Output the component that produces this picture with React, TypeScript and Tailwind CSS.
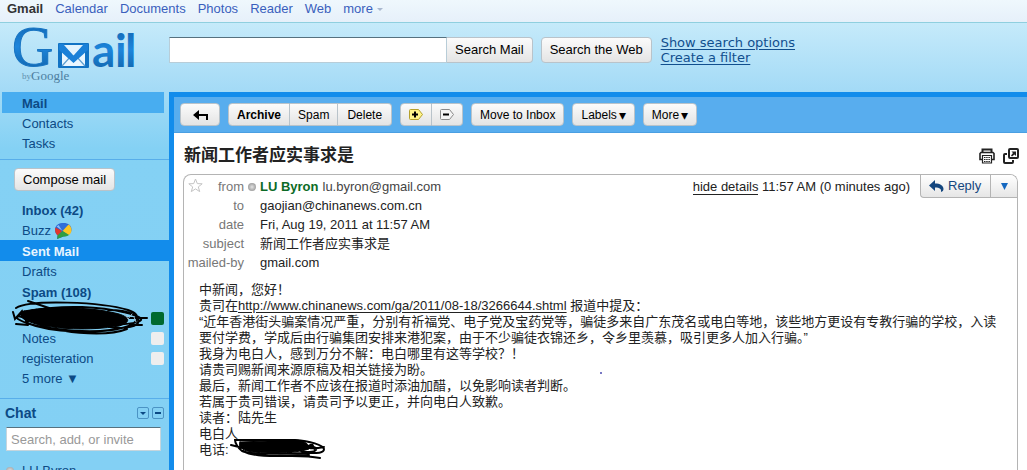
import type { ReactNode } from 'react';
import { twMerge } from 'tailwind-merge';

const NAV_LINKS = ['Calendar', 'Documents', 'Photos', 'Reader', 'Web'];

const BODY_LINES = [
  '“近年香港街头骗案情况严重，分别有祈福党、电子党及宝药党等，骗徒多来自广东茂名或电白等地，该些地方更设有专教行骗的学校，入读要付学费，学成后由行骗集团安排来港犯案，由于不少骗徒衣锦还乡，令乡里羡慕，吸引更多人加入行骗。”',
  '我身为电白人，感到万分不解：电白哪里有这等学校？！',
  '请贵司赐新闻来源原稿及相关链接为盼。',
  '最后，新闻工作者不应该在报道时添油加醋，以免影响读者判断。',
  '若属于贵司错误，请贵司予以更正，并向电白人致歉。',
  '读者：陆先生',
  '电白人',
];

function Logo() {
  return (
    <svg
      className="overflow-visible"
      width="136"
      height="64"
      viewBox="0 0 136 64"
      role="img"
      aria-label="Gmail by Google"
    >
      <defs>
        <linearGradient id="logo-blue" x1="0" y1="0" x2="0" y2="1">
          <stop offset="0" stopColor="#0f5ea8" />
          <stop offset="0.5" stopColor="#1d86dc" />
          <stop offset="1" stopColor="#0f5c9f" />
        </linearGradient>
      </defs>
      <text
        x="12"
        y="43"
        fontSize="57"
        fontFamily="'Liberation Serif', serif"
        fill="url(#logo-blue)"
        stroke="#1874c2"
        strokeWidth="1"
      >
        G
      </text>
      <rect x="58" y="20" width="31" height="25" rx="1" fill="#1273c4" />
      <path d="M62 24h23v19H62z" fill="#eaf6ff" />
      <path d="M62 43l9-10M85 43l-9-10" stroke="#5f9fd0" strokeWidth="1.2" />
      <path d="M59 21h5l9.500 11L83 21h5v6l-14.500 13L59 27z" fill="#1a80d8" />
      <path d="M64 22h19l-9.500 10.500z" fill="#e2f3fe" />
      <text
        x="92 115 125"
        y="44"
        fontSize="46"
        fontWeight="700"
        fontFamily="Lato, sans-serif"
        fill="url(#logo-blue)"
      >
        ail
      </text>
      <text x="22" y="56" fontSize="9" fontFamily="'Liberation Serif', serif" fill="#5f8fae">
        by
      </text>
      <text x="31" y="57" fontSize="13" fontFamily="'Liberation Serif', serif" fill="#4c7d9f">
        Google
      </text>
    </svg>
  );
}

function BuzzIcon() {
  return (
    <svg width="17" height="16" viewBox="0 0 17 16" aria-hidden="true">
      <path d="M8 0c5.500 0 8.500 2.500 8.500 6.500S13 13 8.500 13.500L2 16l.5-4C.8 10.800 0 9 0 7c0-4 3-7 8-7z" fill="#2a62d0" />
      <path d="M.5 4.500L7 8l-4 4.500C.5 11-.5 8 .5 4.500z" fill="#e3362b" />
      <path d="M3 2l4.500 6L13 2C10-.5 6-.5 3 2z" fill="#2f6fd8" />
      <path d="M13.500 1.500L7.500 8l6 4c4-2 4-8 0-10.500z" fill="#fbc623" />
      <path d="M7.500 8l6.500 4c-1.500 1-3.500 1.500-5.500 1.500L2 16l.7-3.800z" fill="#2f9e41" />
      <path d="M1.500 3.500L7.500 8 3.500 2z" fill="#8bbcf7" />
    </svg>
  );
}

function BackIcon() {
  return (
    <svg width="15" height="10" viewBox="0 0 15 10" aria-hidden="true">
      <path d="M0 5l6-5v4h9v6h-2V6H6v4z" fill="#000" />
    </svg>
  );
}

function TagIcon({ kind }: { kind: 'add' | 'remove' }) {
  const add = kind === 'add';
  return (
    <svg width="14" height="11" viewBox="0 0 14 11" aria-hidden="true">
      <path
        d="M1.500.5h8l4 5-4 5h-8a1 1 0 01-1-1v-8a1 1 0 011-1z"
        fill={add ? '#fff58a' : '#f4f4f4'}
        stroke={add ? '#b5a02c' : '#8a8a8a'}
      />
      <path d={add ? 'M3 4.500h2v-2h2v2h2v2H7v2H5v-2H3z' : 'M3 4.500h6v2H3z'} fill="#000" />
    </svg>
  );
}

function StarIcon() {
  return (
    <svg width="15" height="15" viewBox="0 0 15 15" aria-hidden="true">
      <path
        d="M7.500 1l1.800 4.600 4.900.2-3.900 3.100 1.400 4.700-4.200-2.700-4.200 2.700 1.400-4.700L.8 5.800l4.900-.2z"
        fill="#fff"
        stroke="#c4c4c4"
      />
    </svg>
  );
}

function PrintIcon() {
  return (
    <svg width="16" height="16" viewBox="0 0 16 16" fill="none" stroke="#222" aria-hidden="true">
      <path d="M3.500 4V1.500h9V4" strokeWidth="2" />
      <path d="M3 11.500H1v-6l1-1h12l1 1v6h-2" strokeWidth="1.600" />
      <path d="M3.500 7.500h9v7.500h-9z" fill="#fff" strokeWidth="1.200" />
      <path d="M5 9.500h6M5 11.500h6M5 13.500h6" strokeDasharray="1.500 .7" />
    </svg>
  );
}

function NewWindowIcon() {
  return (
    <svg width="16" height="16" viewBox="0 0 16 16" fill="none" stroke="#222" aria-hidden="true">
      <path d="M4 6H2a1 1 0 00-1 1v7a1 1 0 001 1h7a1 1 0 001-1v-2" strokeWidth="2" />
      <rect x="6" y="1" width="9" height="9" rx="1" strokeWidth="2" />
      <path d="M8.500 3.500H13V8l-1.500-1.500-2.500 2-1-1 2-2.500z" fill="#222" stroke="none" />
    </svg>
  );
}

function ReplyIcon() {
  return (
    <svg width="15" height="12" viewBox="0 0 15 12" aria-hidden="true">
      <path d="M0 5.500L6 0v3.500c5 0 8.500 2 8.500 5.500 0 1.500-1 2.500-2.500 3 .5-3-1-4.500-6-4.500V11z" fill="#14467e" />
    </svg>
  );
}

function ToolButton({
  children,
  className,
  label,
}: {
  children: ReactNode;
  className?: string;
  label?: string;
}) {
  return (
    <button
      type="button"
      aria-label={label}
      className={twMerge(
        'flex h-[23px] items-center justify-center border border-[#b9c3ca] bg-linear-to-b from-[#fbfbfb] to-[#e4e4e4] px-2 whitespace-nowrap text-black',
        className,
      )}
    >
      {children}
    </button>
  );
}

function FolderLink({
  children,
  className,
  color,
}: {
  children: ReactNode;
  className?: string;
  color?: string;
}) {
  return (
    <li className={twMerge('flex h-5 items-center pr-[5px] pl-[22px]', className)}>
      <a href="#" className="flex items-center gap-1 pt-0.5">
        {children}
      </a>
      {color && <span className={twMerge('ml-auto size-[13px] rounded-xs', color)} />}
    </li>
  );
}

function Detail({ label, badge, children }: { label: string; badge?: boolean; children: ReactNode }) {
  return (
    <div className="flex h-[19px] items-center">
      <dt className="w-15 text-right text-[#777]">{label}</dt>
      <dd className="flex items-center">
        <span className="flex w-4 justify-center">
          {badge && <span className="size-2 rounded-full bg-radial from-[#e4e4e4] to-[#858585]" />}
        </span>
        {children}
      </dd>
    </div>
  );
}

function LabelScribble() {
  return (
    <svg
      className="absolute -top-2 left-3"
      width="138"
      height="36"
      viewBox="0 0 138 36"
      fill="none"
      stroke="#000"
      strokeLinecap="round"
      aria-hidden="true"
    >
      <path d="M12 11c24-5 67-4 91 2 14 3 18 9 4 13-30 5-64 3-83-2-9-3-21-7-12-13z" fill="#000" />
      <path
        d="M16 1l24 8M4 8c14-9 86-6 112 2 18 6 9 17-18 20C68 34 18 27 6 19c-6-6 24-13 64-12 30 1 66 9 58 14-10 6-90 4-122-5M1 12l2 7 7-8 5 12 9-13 8 14M20 20c20 14 75 17 95 9M15 23c25 10 70 11 95 5M96 10c24 0 33 7 30 13-3 5-20 6-28 4M100 18h35M4 24l12 1M118 25l12 0"
        strokeWidth="2"
      />
      <path d="M113 14l3 5 4-5M122 17l2 5" stroke="#9bb8c8" />
    </svg>
  );
}

function PhoneScribble() {
  return (
    <svg
      className="absolute -top-1 left-full"
      width="98"
      height="22"
      viewBox="0 0 98 22"
      fill="none"
      stroke="#000"
      strokeLinecap="round"
      aria-hidden="true"
    >
      <path d="M10 4l55-2c10 0 16 6 14 9-15 5-48 5-62 2C11 11 8 8 10 4z" fill="#000" />
      <path
        d="M1 7l12 3M5 2h60c15 1 28 5 29 9 0 5-10 4-20 4C50 16 20 17 12 13 8 10 5 5 5 2zM13 13c15 8 45 4 66 4M22 16c18 5 45-1 68 4M60 14c12-6 22-7 26-4 2 4-9 5-15 3M77 9l5-3 3 6M70 4c5 6 10 8 24 5"
        strokeWidth="2"
      />
    </svg>
  );
}

function Sidebar() {
  return (
    <aside className="w-[169px] shrink-0 bg-linear-to-b from-[#a2dbf6] via-[#84d1f4] via-15% to-[#83d0f4] text-[#0c4a85]">
      <ul className="border-b border-[#58aeea] pb-[6px]">
        <FolderLink className="mr-[5px] ml-0.5 h-[21px] bg-[#48adf0] pl-5 font-bold">Mail</FolderLink>
        <FolderLink>Contacts</FolderLink>
        <FolderLink>Tasks</FolderLink>
      </ul>

      <div className="px-[14px] pt-2 pb-[9px]">
        <ToolButton className="rounded-sm">Compose mail</ToolButton>
      </div>

      <ul className="border-b border-[#58aeea] pb-[10px]">
        <FolderLink className="font-bold">Inbox (42)</FolderLink>
        <FolderLink>
          Buzz <BuzzIcon />
        </FolderLink>
        <FolderLink className="h-[21px] bg-[#128ceb] font-bold text-[#e8f5ff]">Sent Mail</FolderLink>
        <FolderLink>Drafts</FolderLink>
        <FolderLink className="h-[21px] font-bold">Spam (108)</FolderLink>
        <li className="relative mt-1.5 flex h-5 items-center justify-end pr-[5px]">
          <LabelScribble />
          <span className="size-[13px] rounded-xs bg-[#00692f]" />
        </li>
        <FolderLink color="bg-[#efeeee]">Notes</FolderLink>
        <FolderLink color="bg-[#efeeee]">registeration</FolderLink>
        <FolderLink>5 more ▼</FolderLink>
      </ul>

      <section className="pr-[5px]">
        <div className="flex h-7 items-center gap-[3px] pl-[5px]">
          <h2 className="mr-auto text-[14px] font-bold">Chat</h2>
          <button
            type="button"
            aria-label="Chat options"
            className="flex size-3 items-center justify-center rounded-xs border border-[#4b93c4]"
          >
            <svg width="6" height="3" viewBox="0 0 6 3" fill="#0c4a85">
              <path d="M0 0h6L3 3z" />
            </svg>
          </button>
          <button
            type="button"
            aria-label="Minimize chat"
            className="flex size-3 items-center justify-center rounded-xs border border-[#4b93c4]"
          >
            <span className="h-0.5 w-1.5 bg-[#0c4a85]" />
          </button>
        </div>
        <input
          type="text"
          aria-label="Search, add, or invite"
          placeholder="Search, add, or invite"
          className="mr-0.5 ml-1.5 h-6 w-[155px] border border-[#c5d5dd] border-t-[#56717f] bg-white px-1 placeholder:text-[#999]"
        />
        <a href="#" className="mt-2.5 flex h-5 items-center gap-2 pl-1.5">
          <span className="size-2 rounded-full bg-radial from-[#e4e4e4] to-[#9a9a9a]" />
          LU Byron
        </a>
      </section>
    </aside>
  );
}

function Toolbar() {
  return (
    <div className="flex h-9 items-center gap-2 border-b border-[#4a9fe2] bg-[#58adee] px-1.5 text-[12px]">
      <ToolButton className="w-10 rounded-sm" label="Back to Sent Mail">
        <BackIcon />
      </ToolButton>
      <div className="flex">
        <ToolButton className="rounded-l-sm font-bold">Archive</ToolButton>
        <ToolButton className="border-l-0">Spam</ToolButton>
        <ToolButton className="rounded-r-sm border-l-0 px-[9px]">Delete</ToolButton>
      </div>
      <div className="flex">
        <ToolButton className="rounded-l-sm" label="Add label">
          <TagIcon kind="add" />
        </ToolButton>
        <ToolButton className="rounded-r-sm border-l-0" label="Remove label">
          <TagIcon kind="remove" />
        </ToolButton>
      </div>
      <ToolButton className="rounded-sm">Move to Inbox</ToolButton>
      <ToolButton className="rounded-sm">
        Labels <span className="ml-0.5 text-[14px]">▾</span>
      </ToolButton>
      <ToolButton className="rounded-sm">
        More <span className="ml-0.5 text-[14px]">▾</span>
      </ToolButton>
    </div>
  );
}

function Message() {
  return (
    <article className="mx-[9px] flex-1 rounded-t-lg border border-b-0 border-[#b4b4b4]">
      <header className="flex items-start">
        <button type="button" aria-label="Star" className="-mr-[19px] ml-1 pt-[3px]">
          <StarIcon />
        </button>
        <dl className="flex-1 pt-0.5 text-[#222]">
          <Detail label="from" badge>
            <b className="mr-1 text-[#0c6b26]">LU Byron</b>
            <span className="text-[#444]">lu.byron@gmail.com</span>
          </Detail>
          <Detail label="to">gaojian@chinanews.com.cn</Detail>
          <Detail label="date">Fri, Aug 19, 2011 at 11:57 AM</Detail>
          <Detail label="subject">新闻工作者应实事求是</Detail>
          <Detail label="mailed-by">gmail.com</Detail>
        </dl>
        <p className="mr-[10px] pt-1 leading-4 text-[#222]">
          <a href="#" className="border-b border-[#222]">
            hide details
          </a>{' '}
          11:57 AM (0 minutes ago)
        </p>
        <div className="flex h-[23px] rounded-tr-[7px] rounded-bl-sm border-b border-l border-[#b4b4b4] bg-linear-to-b from-white to-[#e6e6e6] text-[#14467e]">
          <button type="button" className="flex w-[69px] items-center gap-1 pl-2">
            <ReplyIcon />
            Reply
          </button>
          <button
            type="button"
            aria-label="More reply options"
            className="flex w-[27px] items-center justify-center border-l border-[#b4b4b4]"
          >
            <svg width="7" height="7" viewBox="0 0 7 7" fill="#1467c0">
              <path d="M0 0h7L3.500 7z" />
            </svg>
          </button>
        </div>
      </header>

      <div className="px-[15px] pt-[10px] leading-4 text-[#222]">
        <p>中新闻，您好！</p>
        <p>
          贵司在
          <a href="#" className="underline underline-offset-2">
            http://www.chinanews.com/ga/2011/08-18/3266644.shtml
          </a>{' '}
          报道中提及：
        </p>
        {BODY_LINES.map((line) => (
          <p key={line}>{line}</p>
        ))}
        <p className="relative w-[31px] whitespace-nowrap">
          电话:
          <PhoneScribble />
        </p>
      </div>
    </article>
  );
}

export default function App() {
  return (
    <div className="flex h-screen flex-col overflow-hidden bg-white font-['Liberation_Sans','Noto_Sans_CJK_SC',sans-serif] text-[13px] leading-4">
      <nav className="flex h-[23px] shrink-0 items-center gap-3 border-b border-[#8fcfdf] bg-linear-to-b from-[#eff8fd] to-[#e6f0fa] px-[7px] pb-1 text-[#3a5fbd]">
        <b className="text-[#333]">Gmail</b>
        {NAV_LINKS.map((link) => (
          <a key={link} href="#">
            {link}
          </a>
        ))}
        <a href="#" className="flex items-center gap-1">
          more
          <svg width="6" height="3" viewBox="0 0 6 3" fill="#a9b8cf">
            <path d="M0 0h6L3 3z" />
          </svg>
        </a>
      </nav>

      <header className="flex h-[69px] shrink-0 items-start bg-linear-to-b from-[#c5eafa] to-[#a3daf6]">
        <div className="w-[169px] shrink-0">
          <Logo />
        </div>
        <form className="flex pt-[14px]">
          <input
            type="text"
            aria-label="Search mail"
            className="h-[26px] w-[278px] border border-[#b8cdd8] border-t-[#56717f] bg-white px-1"
          />
          <ToolButton className="h-[26px] rounded-r-sm border-l-0">Search Mail</ToolButton>
          <ToolButton className="ml-2 h-[26px] rounded-sm">Search the Web</ToolButton>
        </form>
        <div className="ml-[9px] flex flex-col items-start pt-3 font-['DejaVu_Sans',sans-serif] text-[13px] leading-[15px] text-[#114f8e]">
          <a href="#" className="underline underline-offset-2">
            Show search options
          </a>
          <a href="#" className="underline underline-offset-2">
            Create a filter
          </a>
        </div>
      </header>

      <div className="flex min-h-0 flex-1">
        <Sidebar />
        <main className="relative flex flex-1 flex-col border-t-[5px] border-l-[5px] border-[#128ceb] bg-white">
          <Toolbar />
          <div className="flex h-[41px] shrink-0 items-center gap-2 pt-1 pr-2 pl-[10px]">
            <h1 className="mr-auto text-[17px] leading-6 font-bold text-[#222]">新闻工作者应实事求是</h1>
            <button type="button" aria-label="Print">
              <PrintIcon />
            </button>
            <button type="button" aria-label="Open in new window">
              <NewWindowIcon />
            </button>
          </div>
          <Message />
          {/* stray pen mark */}
          <span className="absolute top-[275px] left-[426px] size-0.5 rounded-full bg-[#4b4bb0]" />
        </main>
      </div>
    </div>
  );
}
